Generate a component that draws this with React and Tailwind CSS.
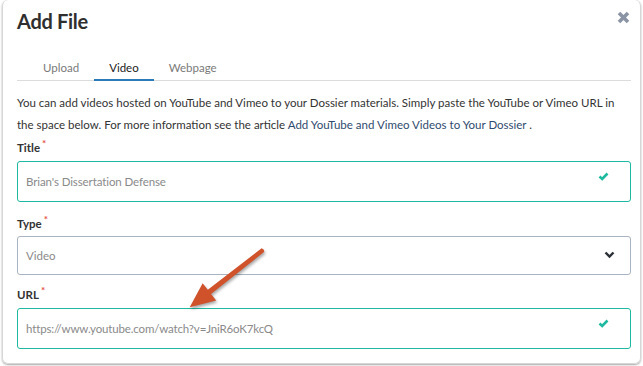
import { useState } from 'react';

const Star = () => <span className="relative -top-[5px] ml-[2px] text-[10px] text-[#e5534b]">*</span>;

function Check() {
  return (
    <svg width="11" height="9" viewBox="0 0 11 9" className="absolute right-[21px] top-[10px]">
      <path d="M1.5 4.5 L4.2 7 L9.5 1.5" fill="none" stroke="#1fb9a0" strokeWidth="2.6" />
    </svg>
  );
}

function Label({ children }) {
  return (
    <div className="h-[18px] text-[11.5px] font-bold leading-[18px] text-[#333]">
      {children}
      <Star />
    </div>
  );
}

export default function App() {
  const [tab, setTab] = useState('Video');
  const tabs = ['Upload', 'Video', 'Webpage'];

  return (
    <div className="relative h-[366px] w-[643px] bg-white font-['Lato',sans-serif] text-[#333]">
      <div className="ml-[2px] h-[364px] w-[639px] rounded-b-[6px] rounded-t-[6px] border border-t-0 border-[#d6d6d6] pl-[14px] pr-[9px] shadow-[0_1px_2px_rgba(0,0,0,0.35)]">
        <div className="flex h-[40px] items-start justify-between pt-[9px]">
          <h1 className="text-[20px] font-bold leading-[24px] tracking-[-0.3px] text-[#2f2f2f]">Add File</h1>
          <svg width="13" height="13" viewBox="0 0 13 13" className="mr-[1px] mt-[2px]">
            <path d="M2 2 L11 11 M11 2 L2 11" stroke="#8a94a5" strokeWidth="3.6" />
          </svg>
        </div>

        <div className="flex h-[41px] items-end border-b border-[#dcdcdc] pl-[11px]">
          {tabs.map((t) => (
            <button
              key={t}
              onClick={() => setTab(t)}
              className={`-mb-px h-[25px] border-b-2 px-[15px] text-[11.5px] leading-[18px] ${
                tab === t ? 'border-[#2b7bb8] text-[#222]' : 'border-transparent text-[#7a7a7a]'
              }`}
            >
              {t}
            </button>
          ))}
        </div>

        <p className="mt-[11px] text-[11.5px] leading-[22px] text-[#333]">
          You can add videos hosted on YouTube and Vimeo to your Dossier materials. Simply paste the YouTube or Vimeo URL in
          the space below. For more information see the article{' '}
          <span className="text-[#2f4b6e]">Add YouTube and Vimeo Videos to Your Dossier</span> .
        </p>

        <div className="mt-[3px]">
          <Label>Title</Label>
          <div className="relative mt-[4px] flex h-[41px] items-center rounded-[3px] border border-[#1fb9a0] pl-[8px] text-[11.5px] tracking-[-0.1px] text-[#8a8a8a]">
            Brian's Dissertation Defense
            <Check />
          </div>
        </div>

        <div className="mt-[13px]">
          <Label>Type</Label>
          <div className="relative mt-[3px] flex h-[39px] items-center rounded-[3px] border border-[#a9b3c1] pl-[8px] text-[11.5px] text-[#8a8a8a]">
            Video
            <svg width="11" height="8" viewBox="0 0 11 8" className="absolute right-[15px] top-[14px]">
              <path d="M1.5 1.5 L5.5 5.5 L9.5 1.5" fill="none" stroke="#2b2f36" strokeWidth="2.4" />
            </svg>
          </div>
        </div>

        <div className="mt-[11px]">
          <Label>URL</Label>
          <div className="relative mt-[4px] flex h-[41px] items-center rounded-[3px] border border-[#1fb9a0] pl-[8px] text-[11.5px] tracking-[-0.15px] text-[#8a8a8a]">
            https://www.youtube.com/watch?v=JniR6oK7kcQ
            <Check />
          </div>
        </div>
      </div>

      <svg width="643" height="366" className="pointer-events-none absolute left-0 top-0" style={{ filter: 'drop-shadow(1px 2px 1.5px rgba(0,0,0,0.35))' }}>
        <g transform="translate(263 250) rotate(142)">
          <path d="M0 -2.2 L68 -2.6 L68 -11 L93 0 L68 11 L68 2.6 L0 2.2 Q-1.5 0 0 -2.2 Z" fill="#cf522b" />
        </g>
      </svg>
    </div>
  );
}
